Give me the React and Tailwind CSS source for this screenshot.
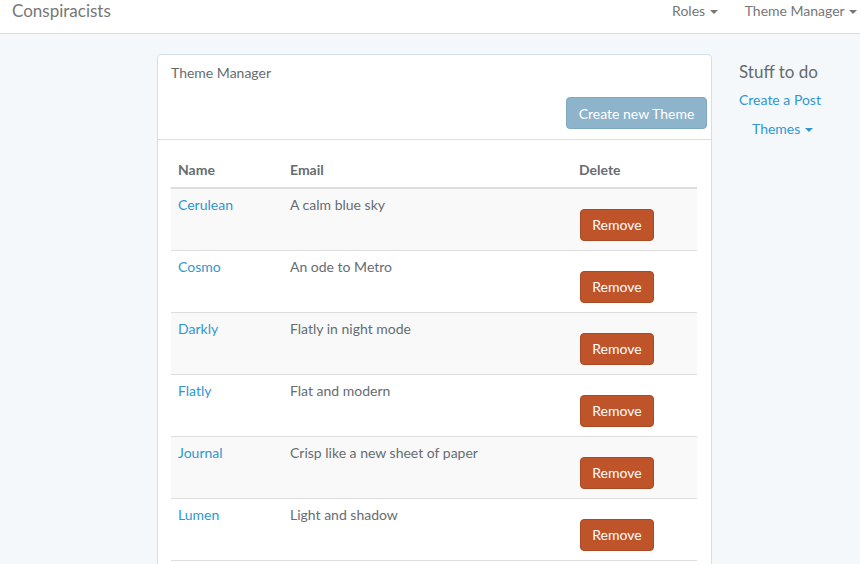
const themes = [
  { name: "Cerulean", desc: "A calm blue sky" },
  { name: "Cosmo", desc: "An ode to Metro" },
  { name: "Darkly", desc: "Flatly in night mode" },
  { name: "Flatly", desc: "Flat and modern" },
  { name: "Journal", desc: "Crisp like a new sheet of paper" },
  { name: "Lumen", desc: "Light and shadow" },
];

function Caret() {
  return (
    <span className="inline-block w-0 h-0 ml-[1px] align-middle border-x-[4px] border-t-[4px] border-x-transparent border-t-current" />
  );
}

export default function App() {
  return (
    <div className="min-h-screen bg-[#f5f8fa] font-['Lato',sans-serif] text-[14px] text-[#666d71] overflow-hidden">
      {/* navbar */}
      <nav className="h-[34px] bg-white border-b border-[#d3e0e9] flex justify-between">
        <a className="pl-3 h-[21px] flex items-center text-[17px] text-[#777]">Conspiracists</a>
        <ul className="flex h-[21px] items-center text-[#777] pr-[3px]">
          <li>
            Roles <Caret />
          </li>
          <li className="pl-[27px]">
            Theme Manager <Caret />
          </li>
        </ul>
      </nav>

      <div className="flex pt-5">
        <div className="w-[157px] shrink-0" />

        {/* panel */}
        <div className="w-[555px] shrink-0 bg-white border border-[#d3e0e9] rounded-[4px] pb-10">
          <div className="border-b border-[#d3e0e9] pt-[7px] pb-[10px] pl-[13px] pr-[4px]">
            <div className="leading-[22px]">Theme Manager</div>
            <div className="flex justify-end mt-[13px]">
              <button className="h-[32px] w-[141px] bg-[#8eb4cb] border border-[#7da8c3] rounded-[4px] text-white">
                Create new Theme
              </button>
            </div>
          </div>

          <div className="pl-[13px] pr-[14px]">
            <div className="grid grid-cols-[112px_289px_1fr] pt-[20px] pb-[7px] border-b-2 border-[#ddd] font-bold leading-[20px]">
              <div className="pl-[7px]">Name</div>
              <div className="pl-[7px]">Email</div>
              <div className="pl-[7px]">Delete</div>
            </div>
            {themes.map((t, i) => (
              <div
                key={t.name}
                className={
                  "grid grid-cols-[112px_289px_1fr] h-[62px] border-b border-[#ddd] leading-[20px] " +
                  (i % 2 === 0 ? "bg-[#f9f9f9]" : "bg-white")
                }
              >
                <div className="pl-[7px] pt-[6px]">
                  <a className="text-[#3097d1]">{t.name}</a>
                </div>
                <div className="pl-[7px] pt-[6px]">{t.desc}</div>
                <div className="pl-[8px] pt-[20px]">
                  <button className="h-[32px] w-[74px] bg-[#bf5329] border border-[#aa4a24] rounded-[4px] text-white">
                    Remove
                  </button>
                </div>
              </div>
            ))}
          </div>
        </div>

        {/* sidebar */}
        <div className="ml-[27px] pt-[7px]">
          <h4 className="text-[17px] leading-[22px] text-[#636b6f]">Stuff to do</h4>
          <a className="block mt-[6px] leading-[22px] text-[#3097d1]">Create a Post</a>
          <a className="block mt-[7px] ml-[13px] leading-[22px] text-[#3097d1]">
            Themes <Caret />
          </a>
        </div>
      </div>
    </div>
  );
}
